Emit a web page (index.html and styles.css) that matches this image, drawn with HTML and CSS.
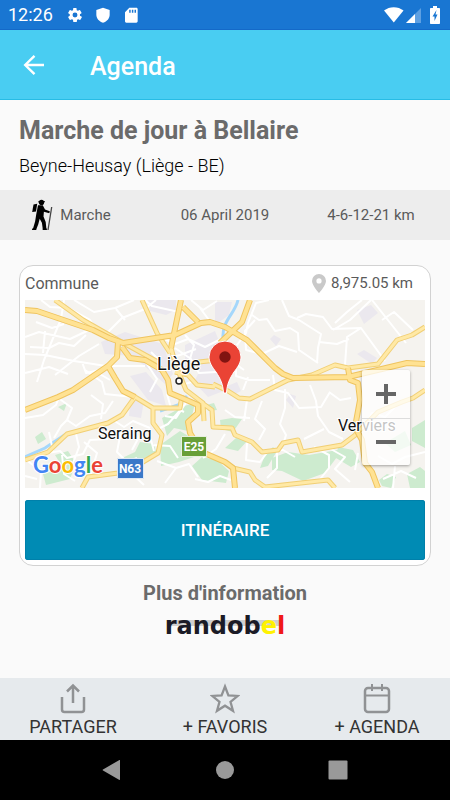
FILE: index.html
```html
<!DOCTYPE html>
<html lang="fr">
<head>
<meta charset="utf-8">
<meta name="viewport" content="width=device-width, initial-scale=1">
<title>Agenda</title>
<link rel="stylesheet" href="styles.css">
</head>
<body>
<div class="status">
  <span class="clock">12:26</span>
  <svg class="status-icon" viewBox="0 0 24 24" aria-hidden="true"><path fill="#fff" fill-rule="evenodd" d="M19.4 13a7.500 7.500 0 0 0 0-2l2.300-1.700c.2-.2.300-.5.100-.7l-2.200-3.800c-.1-.2-.4-.3-.7-.2l-2.600 1.100a8 8 0 0 0-1.700-1l-.4-2.800c0-.2-.2-.4-.5-.4H9.900c-.3 0-.5.200-.5.400L9 4.700a8 8 0 0 0-1.700 1L4.700 4.600c-.2-.1-.5 0-.7.200L1.800 8.600c-.1.200-.1.500.1.700L4.200 11a7.500 7.500 0 0 0 0 2l-2.300 1.700c-.2.200-.3.500-.1.700L4 19.200c.1.200.4.300.7.200l2.600-1.100a8 8 0 0 0 1.700 1l.4 2.800c0 .2.200.4.500.4h4.300c.3 0 .5-.2.500-.4l.4-2.800a8 8 0 0 0 1.700-1l2.600 1.100c.2.100.5 0 .7-.2l2.200-3.800c.1-.2.100-.5-.1-.7zM12 15.700a3.700 3.700 0 1 1 0-7.400 3.700 3.700 0 0 1 0 7.400z"/></svg>
  <svg class="status-icon" viewBox="0 0 24 24" aria-hidden="true"><path fill="#fff" d="M12 1 2 4.500v7C2 17 6 21.500 12 23.500c6-2 10-6.500 10-12v-7z"/></svg>
  <svg class="status-icon" viewBox="0 0 24 24" aria-hidden="true"><path fill="#fff" fill-rule="evenodd" d="M20 1H9.500L3 8v13.500c0 1 .8 2 2 2h15c1 0 2-1 2-2V3c0-1-.9-2-2-2zM11.500 8.500H9.300V4h2.200zm4 0h-2.200V4h2.200zm4 0h-2.200V4h2.200z"/></svg>
  <svg class="radio" viewBox="0 0 58 18" aria-hidden="true">
    <path fill="#fff" d="M0 4.500C5.500 0 14 0 19.500 4.500L9.800 16.500z"/>
    <path fill="#5ea0e2" d="M37 2v15H22z"/><path fill="#fff" d="M31 8v9h-9z"/>
    <path fill="#fff" d="M49 2V0h4v2h2c.6 0 1 .4 1 1v14c0 .6-.4 1-1 1h-8c-.6 0-1-.4-1-1V3c0-.6.4-1 1-1z"/>
    <path fill="#1976d2" d="M52.500 4 48.500 10.500h2V15l3-6.500h-2z"/>
  </svg>
</div>
<header class="appbar">
  <button class="back" type="button" aria-label="Retour">
    <svg viewBox="0 0 24 24" width="24" height="24" fill="none" stroke="#fff" stroke-width="2.400"><path d="M22 12H3.500M12.500 2.800 3.200 12l9.300 9.200"/></svg>
  </button>
  <h1>Agenda</h1>
</header>
<main>
  <section class="intro">
    <h2>Marche de jour à Bellaire</h2>
    <p>Beyne-Heusay (Liège - BE)</p>
  </section>
  <ul class="facts">
    <li>
      <svg class="hiker" viewBox="0 0 22 32" aria-hidden="true">
        <circle cx="10.500" cy="3.400" r="2.600"/><path d="M7 2.500 14 2.200v1H7z"/>
        <path d="M2.500 5.500 6.200 4.800 5 12.500 1.200 13z"/>
        <path d="M7 6.300h4.800l2.200 4.200 4.800 1.800-.5 2-5.400-1.500-.4 4.600 2.200 5.600.8 7.900h-3.600l-1-7.200-2.200-4L7.200 25.500 5 31H1.600l2.500-8.500 1.200-7.500z"/>
        <path d="M1.200 29.500h4V31H1zM11.800 29.500h4V31h-4z"/>
        <path d="M20.700 8 17 31" fill="none" stroke="#444" stroke-width="1.300"/>
      </svg>
      <span>Marche</span>
    </li>
    <li>06 April 2019</li>
    <li>4-6-12-21 km</li>
  </ul>
  <section class="card">
    <div class="card-head">
      <span>Commune</span>
      <span class="distance">
        <svg viewBox="0 0 14 19" width="14" height="19" aria-hidden="true"><path fill="#c9c9c9" fill-rule="evenodd" d="M7 0a7 7 0 0 0-7 7c0 4.500 7 12 7 12s7-7.500 7-12a7 7 0 0 0-7-7zm0 9.500a2.600 2.600 0 1 1 0-5.200 2.600 2.600 0 0 1 0 5.200z"/></svg>
        8,975.05 km
      </span>
    </div>
    <div class="map">
      <svg class="map-art" viewBox="0 0 400 188" role="img" aria-label="Carte de Liège">
        <path fill="#f5f3ef" d="M0 0h400v188H0z"/>
        <g fill="#ebe8ee">
          <path d="M123 0h28v10l-10 5-16-4zM76 42l24-10 38 12 10 30-8 10-32-28-28-2zM160 45l30-14 8 20-4 20-34-2zM105 76l16-4 16 18 4 16-18-6zM190 2h17l-3 13-14 10zM176 68l22 4 3 18-18 7-14-15zM332 10l14-5 7 8-14 11zM332 54l7-4 13 8-5 6zM245 39l4-4 7 4-5 7zM200 87l12-5 4 9-10 5zM265 94l6 2-3 12-7-8zM106 92l13 9-3 17-12-2z"/>
        </g>
        <g fill="#cdebcf">
          <path d="M137 118l22-12 11-3-4 17-3 11-14-3-7 8zM135 145l20-14 10 6 7 19-18 6-18 4zM97 158l13-6 5-10 14 2 2 8-13 13-11-1zM18 174l20-6-8-13 13-4 8 12-6 16-24 6zM177 157l15 3 12 11-3 12-24-3-10-14zM195 120l12-2 10 1-9 13-12-3zM200 148l11-10 13 1-11 12zM247 158l16-6 21 3 34-6-18 24-22 8-21-10-10-1zM313 147l15 3 7 12-9 5-15-9zM387 128l13-8v28l-13-7zM382 174l13-7 5 4v17h-15zM354 180l8-6 9 3-5 11-9-2zM33 107l9-4-3 8zM10 137l7-5 4 7-8 5zM181 105l8-2 3 7-9 1zM240 155l8-8 4 4-9 15-8 2zM360 143l20-12 6 14-16 7z"/>
        </g>
        <g fill="none" stroke="#a5d7fb" stroke-width="3">
          <path d="M0 157 20 148 41 134M135 111l18-6 9-9"/><path d="M213 0c-3 14-16 20-15 38" stroke-width="3"/>
        </g>
        <g fill="none" stroke="#fff" stroke-width="2" stroke-linejoin="round">
          <path d="M0 37 14 32 45 39 64 30M39 0 36 19 19 60 12 82M0 54 20 55 49 61 81 66 120 66M16 0 25 7 43 8 65 20 74 33M49 0 69 12 90 8 109 0M80 35 97 18 120 9 131 0M5 47 24 48 34 43 49 46 61 35M30 75 54 56 74 44M57 62 61 73 80 69M11 22 27 28 39 24M20 31 18 53M0 73 24 67 43 74M100 20 91 9"/>
          <path d="M120 0 127 6 154 12M166 0 178 10 192 1M175 8 184 20M138 38 150 44 163 39 180 47 194 40M150 48 166 59 174 73 191 72M160 35 169 45 165 59M143 58 155 55 171 49M156 70 151 79 160 84 170 81M126 52 133 59M120 61 132 79 125 92M205 49 212 45 221 33 223 23 231 3 244 0M227 15 234 20 242 19 250 31 265 28 273 33 274 50 293 63M230 20 220 31 221 50 237 54 254 46 272 52M257 0 264 16 274 20 296 34 293 48 292 63M272 18 281 14 298 17 307 29 336 28 360 61M308 30 325 20 346 0M310 23 322 12 337 0M336 28 322 37 320 65M294 42 312 44 324 39M347 0 381 43M357 20 369 12 388 30M211 54 211 76 224 80 245 80M223 77 218 90M205 60 219 70M248 75 250 90 263 93 274 108 296 107 305 92M237 101 230 119 240 129 234 140M260 89 260 108 255 124 261 135 257 148M285 85 291 101 293 116 304 132 318 139M299 129 279 139M222 100 219 121M200 110 210 117 225 118M304 92 315 100 326 98M222 143 221 160 235 162 244 150 258 150 270 157M252 151 252 168 242 178M289 147 304 155 304 168 292 183M304 148 320 157 310 169 325 182M333 153 330 170M353 156 367 164 380 157 400 152M358 179 376 171 391 178M370 166 368 188M340 128 347 113 360 117 370 107"/>
          <path d="M0 118 18 115 31 105 35 94 49 90M32 97 47 108 42 120 51 126 65 116 80 113 88 101M29 138 36 126 43 119M50 130 54 147 47 166 60 176M15 188 16 171 0 159M0 176 12 179M22 153 35 151 42 158 58 154 65 140 83 139M37 155 39 174 50 181M88 120 99 127 108 121 125 128M60 70 77 82 80 94 108 97M73 73 85 80M96 131 92 152 102 162 112 158M107 150 115 135 126 140 129 151M128 145 145 146 153 158M140 116 151 118 162 101M131 130 143 124 158 107M142 94 146 108M151 108 159 112M108 161 105 172 119 185M132 161 151 168 164 164 173 177M151 168 140 183M170 179 183 182 195 176 206 180M178 158 191 149 200 134M165 139 159 152M66 95 78 104 76 119M24 132 28 151M59 142 72 153 66 174"/>
        </g>
        <g fill="none" stroke-linejoin="round">
          <path stroke="#f1cf75" stroke-width="5" d="M30 0 58 20 93 40 133 62M117 0 132 33 145 53M0 160 23 152 42 134 83 123 97 115 110 97 128 108 155 108 157 95M128 108V123L137 135 133 153 118 162 93 173 63 177 57 188M177 103 187 110 188 127 207 128 210 135 227 142 237 152 253 150 258 143 273 140 277 152 317 145 333 133M208 168 225 172 230 180 240 187 303 180 310 188M188 84 203 91 214 98 225 99 263 80 287 75 310 65 323 68 353 64 372 40 387 35 400 27M330 135 353 112 377 102 388 98 400 90M150 72 163 75 172 85 190 87M165 66 174 62 192 60M146 48 151 66 161 90 178 103 179 121"/>
          <path stroke="#ffe9a6" stroke-width="3" d="M30 0 58 20 93 40 133 62M117 0 132 33 145 53M0 160 23 152 42 134 83 123 97 115 110 97 128 108 155 108 157 95M128 108V123L137 135 133 153 118 162 93 173 63 177 57 188M177 103 187 110 188 127 207 128 210 135 227 142 237 152 253 150 258 143 273 140 277 152 317 145 333 133M208 168 225 172 230 180 240 187 303 180 310 188M188 84 203 91 214 98 225 99 263 80 287 75 310 65 323 68 353 64 372 40 387 35 400 27M330 135 353 112 377 102 388 98 400 90M150 72 163 75 172 85 190 87M165 66 174 62 192 60M146 48 151 66 161 90 178 103 179 121"/>
          <path stroke="#efc45f" stroke-width="6" d="M0 10 12 11 68 30 84 38 98 43 150 35 176 23 185 22 200 27 222 40 250 68 258 74 268 78 323 77 382 63 400 64M93 42 92 57 83 66 48 90 33 97 0 110M83 66 90 78 98 91 110 97M156 0 146 48M158 7 173 22M97 47 105 58 120 60 137 70 143 80 145 93 157 98 173 105 173 113 163 122 165 133 177 152 200 162 208 168 210 188M225 0 217 22 195 43M323 68 325 80 333 83 335 100 330 127 337 140 340 163 347 172 353 188"/>
          <path stroke="#ffe293" stroke-width="4" d="M0 10 12 11 68 30 84 38 98 43 150 35 176 23 185 22 200 27 222 40 250 68 258 74 268 78 323 77 382 63 400 64M93 42 92 57 83 66 48 90 33 97 0 110M83 66 90 78 98 91 110 97M156 0 146 48M158 7 173 22M97 47 105 58 120 60 137 70 143 80 145 93 157 98 173 105 173 113 163 122 165 133 177 152 200 162 208 168 210 188M225 0 217 22 195 43M323 68 325 80 333 83 335 100 330 127 337 140 340 163 347 172 353 188"/>
        </g>
        <circle cx="154" cy="81" r="3" fill="#fff" stroke="#222" stroke-width="1.500"/>
        <g class="places">
          <text x="132" y="70" class="city">Liège</text>
          <text x="73" y="139">Seraing</text>
          <text x="313" y="131">Verviers</text>
        </g>
        <path fill="#689f38" stroke="#e8f0df" d="M156.500 136.500h25v20h-25z"/>
        <path fill="#3a78c8" stroke="#dfe8f5" d="M92.500 158.500h26v20h-26z"/>
        <text x="169" y="151" class="shield">E25</text>
        <text x="105" y="173" class="shield">N63</text>
        <path fill="#ea4335" stroke="#fff" stroke-width="1" d="M198.500 93c-.5-9-3-14-7.500-21-4-5-7-10-7-15a16 16 0 0 1 32 0c0 5-3 10-7 15-4.500 7-7 12-7.500 21z"/>
        <circle cx="200" cy="57" r="5.700" fill="#811411"/>
        <text x="8" y="173" class="google"><tspan fill="#4285f4">G</tspan><tspan fill="#ea4335">o</tspan><tspan fill="#fbbc05">o</tspan><tspan fill="#4285f4">g</tspan><tspan fill="#34a853">l</tspan><tspan fill="#ea4335">e</tspan></text>
      </svg>
      <div class="zoom">
        <button type="button" aria-label="Zoom avant"><svg viewBox="0 0 22 22" width="22" height="22"><path fill="#666" d="M9 1h4v8h8v4h-8v8H9v-8H1V9h8z"/></svg></button>
        <button type="button" aria-label="Zoom arrière"><svg viewBox="0 0 22 22" width="22" height="22"><path fill="#666" d="M1 9h20v4H1z"/></svg></button>
      </div>
    </div>
    <button class="route" type="button">ITINÉRAIRE</button>
  </section>
  <section class="more">
    <h3>Plus d'information</h3>
    <a class="logo" href="#randobel">randob<span class="yellow">e</span><span class="red">l</span></a>
  </section>
</main>
<footer class="actions">
  <button type="button">
    <svg viewBox="0 0 30 32" width="30" height="32" fill="none" stroke="#909294" stroke-width="2.500"><path d="M4 14v12.500c0 1.500 1 2.500 2.500 2.500h17c1.500 0 2.500-1 2.500-2.500V14M15 20V3M9 8.500l6-6 6 6"/></svg>
    PARTAGER
  </button>
  <button type="button">
    <svg viewBox="0 0 30 32" width="30" height="32" fill="none" stroke="#909294" stroke-width="2.300"><path d="m15 3.500 3.400 8.800 9.400.6-7.300 5.900 2.500 9-8-5.100-8 5.100 2.500-9-7.300-5.900 9.400-.6z"/></svg>
    + FAVORIS
  </button>
  <button type="button">
    <svg viewBox="0 0 30 32" width="30" height="32" fill="none" stroke="#909294" stroke-width="2.500"><rect x="3" y="5" width="24" height="24" rx="3"/><path d="M3 12.500h24M10 1v7M20 1v7" stroke-width="2"/></svg>
    + AGENDA
  </button>
</footer>
<nav class="system">
  <button type="button" aria-label="Précédent"><svg viewBox="0 0 20 20" width="20" height="20"><path fill="#999" d="M18 .5v19c0 .5-.5.600-1 .3L1 10.500q-.8-.5 0-1L17 .2c.5-.3 1-.2 1 .3z"/></svg></button>
  <button type="button" aria-label="Accueil"><svg viewBox="0 0 20 20" width="20" height="20"><circle cx="10" cy="10" r="9" fill="#999"/></svg></button>
  <button type="button" aria-label="Applications"><svg viewBox="0 0 20 20" width="20" height="20"><rect x=".5" y=".5" width="19" height="19" rx="1" fill="#999"/></svg></button>
</nav>
</body>
</html>
```
FILE: styles.css
```css
* { box-sizing: border-box; }

body {
  margin: 0;
  min-height: 100vh;
  display: flex;
  flex-direction: column;
  background: #fafafa;
  color: #5a5a5a;
  font-family: Roboto, "Liberation Sans", sans-serif;
}

h1, h2, h3, p, ul { margin: 0; padding: 0; }

button {
  border: 0;
  padding: 0;
  background: none;
  color: inherit;
  font: inherit;
}

svg { display: block; flex: none; }

.status {
  display: flex;
  align-items: center;
  gap: 12px;
  height: 30px;
  padding: 0 8px;
  background: #1976d2;
  border-bottom: 1px solid #1469c8;
  color: #fff;
}

.clock { margin-right: 2px; font-size: 18px; }
.status-icon { width: 16px; height: 16px; }
.radio { width: 58px; height: 18px; margin-left: auto; }

.appbar {
  display: flex;
  align-items: center;
  gap: 44px;
  height: 70px;
  padding: 0 22px;
  background: #49cdf2;
  border-bottom: 1px solid #27bce5;
  color: #fff;
}

.appbar h1 { padding-top: 3px; font-size: 25px; font-weight: 500; }

main { flex: 1; }

.intro { padding: 16px 19px 12px; }
.intro h2 { color: #6b6b6b; font-size: 25px; line-height: 30px; font-weight: 700; }
.intro p { padding-top: 7px; color: #000; font-size: 18px; line-height: 25px; font-weight: 300; }

.facts {
  display: grid;
  grid-template-columns: repeat(3, 1fr);
  align-items: center;
  height: 50px;
  background: #ededed;
  font-size: 15px;
  list-style: none;
}

.facts li { display: flex; align-items: center; justify-content: center; gap: 7px; }
.facts li:not(:nth-child(2)) { padding-right: 8px; }
.hiker { width: 22px; height: 32px; }

.card {
  margin: 25px 19px 0;
  padding: 5px;
  border: 1px solid #d2d2d2;
  border-radius: 14px;
  background: #fff;
}

.card-head {
  display: flex;
  align-items: center;
  justify-content: space-between;
  height: 24px;
  margin-bottom: 5px;
  padding-right: 12px;
  font-size: 16px;
}

.distance { display: flex; align-items: center; gap: 5px; font-size: 15px; }

.map { position: relative; }
.map-art { width: 100%; height: auto; }
.places { font-size: 16px; fill: #111; stroke: #fff; stroke-width: 2px; paint-order: stroke; }
.city { font-size: 18px; }
.shield { font-size: 12px; font-weight: 700; fill: #fff; text-anchor: middle; }
.google { font-family: Lato, sans-serif; font-size: 22px; font-weight: 700; stroke: #fff; stroke-width: 2px; paint-order: stroke; }

.zoom {
  position: absolute;
  right: 15px;
  bottom: 23px;
  width: 48px;
  border-radius: 2px;
  background: rgba(255, 255, 255, 0.75);
  box-shadow: 0 1px 3px rgba(0, 0, 0, 0.35);
}

.zoom button { display: grid; place-items: center; width: 100%; height: 48px; }
.zoom button + button { height: 47px; border-top: 1px solid #ddd; }

.route {
  width: 100%;
  height: 60px;
  margin-top: 12px;
  border-radius: 3px;
  background: #008bb4;
  box-shadow: inset 0 0 0 1px #0080aa;
  color: #fff;
  font-size: 17px;
  font-weight: 500;
}

.more { display: flex; flex-direction: column; align-items: center; padding-top: 15px; }
.more h3 { color: #6b6b6b; font-size: 20px; line-height: 24px; font-weight: 700; }

.logo {
  margin-top: 5px;
  background: linear-gradient(#d0d0d0, #d0d0d0) center 10px / 114px 6px no-repeat;
  color: #1b1b26;
  font-family: "DejaVu Sans", sans-serif;
  font-size: 24px;
  font-weight: 700;
  line-height: 32px;
  text-decoration: none;
}

.yellow { color: #fff200; }
.red { color: #f01818; }

.actions {
  display: grid;
  grid-template-columns: repeat(3, 1fr);
  gap: 6px;
  height: 62px;
  background: #e6eaed;
  color: #333;
  font-size: 18px;
}

.actions button { display: flex; flex-direction: column; align-items: center; padding-top: 5px; line-height: 23px; }

.system {
  display: flex;
  align-items: center;
  justify-content: center;
  gap: 93px;
  height: 60px;
  background: #000;
}
```
